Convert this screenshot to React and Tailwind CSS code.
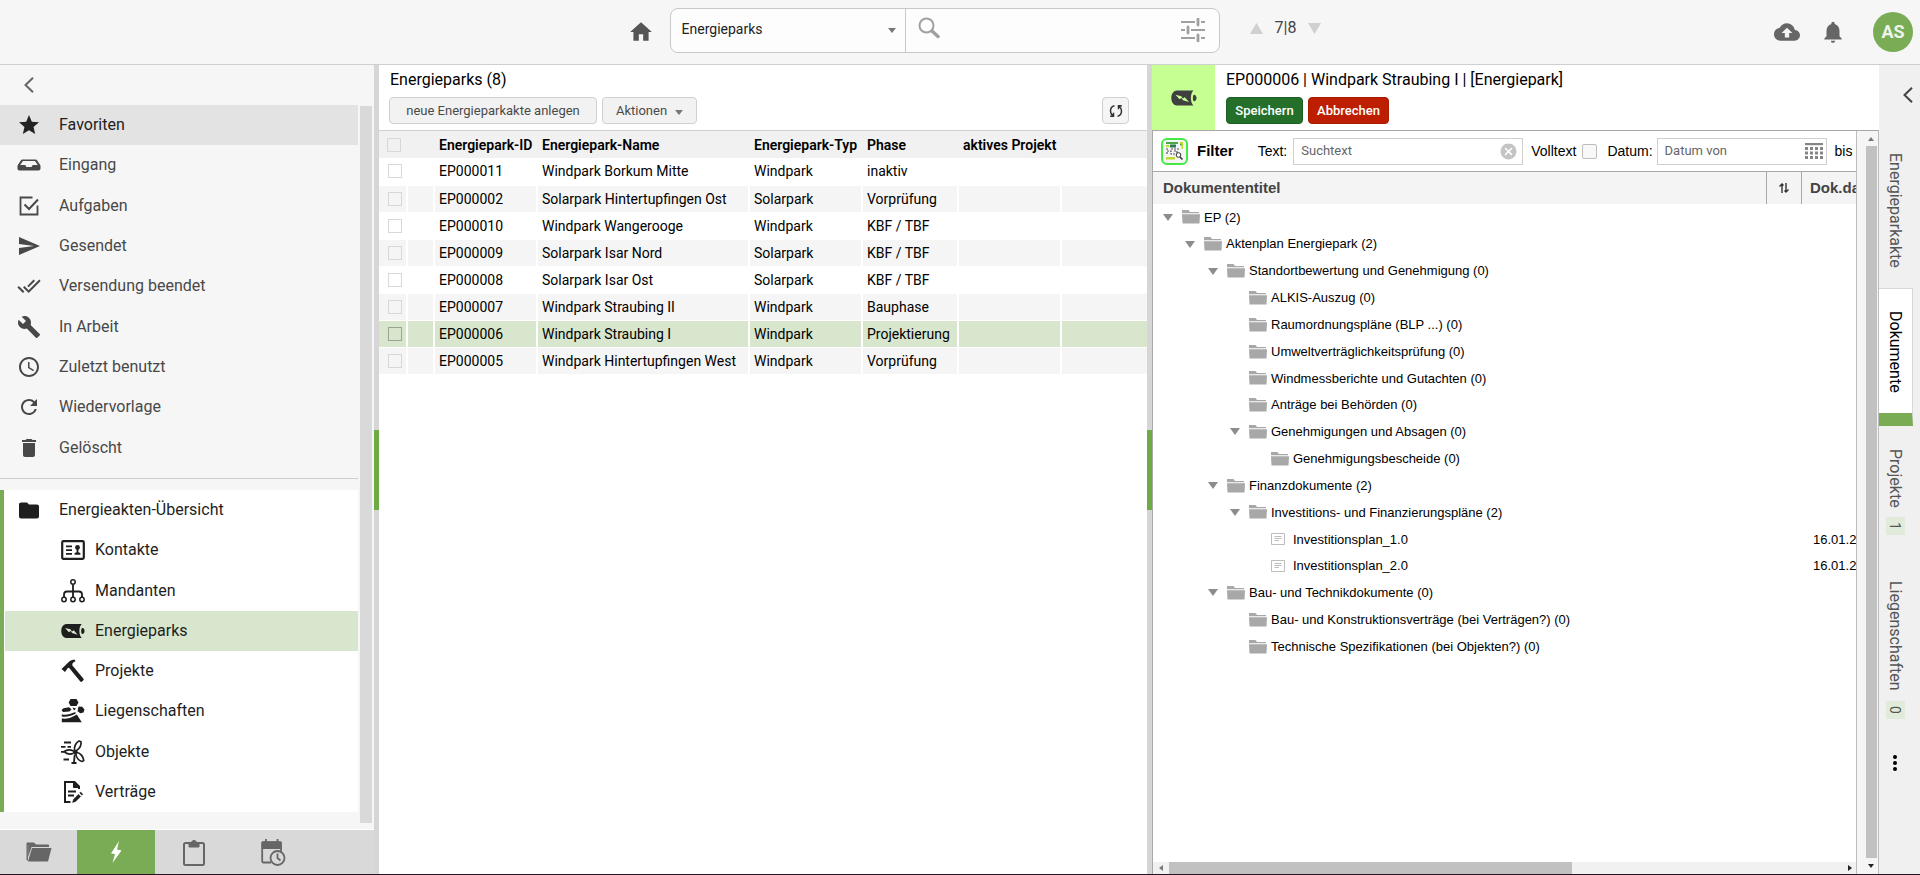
import { useState } from 'react';
import {
  MdAccessTime,
  MdBackup,
  MdBuild,
  MdCancel,
  MdDelete,
  MdDoneAll,
  MdFolder,
  MdHome,
  MdNotifications,
  MdRefresh,
  MdSend,
  MdStar,
} from 'react-icons/md';

function InboxIcon({ className }) {
  return (
    <svg className={className} viewBox="0 0 24 24" fill="currentColor">
      <path fillRule="evenodd" d="M5.500 6.500h13c.8 0 1.300.3 1.700 1l3 4.500c.2.400.3.700.3 1.200v2.300c0 1.100-.8 2-2 2h-19c-1.200 0-2-.9-2-2v-2.300c0-.5.1-.8.3-1.200l3-4.500c.4-.7.900-1 1.700-1zM6 8l-2.800 4h4.600c.5 0 .8.300 1 .8l.3.700c.2.400.4.500.8.500h4.200c.4 0 .6-.1.800-.5l.3-.7c.2-.5.5-.8 1-.8h4.600L18 8z" />
    </svg>
  );
}

function TaskIcon({ className }) {
  return (
    <svg className={className} viewBox="0 0 24 24" fill="none" stroke="currentColor" strokeWidth="1.800">
      <path d="M15.500 3.500H3.500v17h17V11.500" />
      <path d="M7.500 10.500l4.500 4.500L21 5.500" strokeWidth="2" />
    </svg>
  );
}

function ContactIcon({ className }) {
  return (
    <svg className={className} viewBox="0 0 24 24" fill="currentColor">
      <rect x="1.200" y="3.200" width="21.600" height="17.600" rx="1.200" fill="none" stroke="currentColor" strokeWidth="2.200" />
      <path d="M5 7.500h6v1.700H5zM5 11.200h6v1.700H5zM5 15h6v1.700H5z" />
      <circle cx="16.500" cy="9.500" r="2.400" />
      <path d="M15.600 11h1.800v3.200l2 .8v1.700h-5.800V15l2-.8z" />
    </svg>
  );
}

function OrgIcon({ className }) {
  return (
    <svg className={className} viewBox="0 0 24 24" fill="none" stroke="currentColor" strokeWidth="1.500">
      <circle cx="12" cy="3" r="2.200" />
      <circle cx="3" cy="20.500" r="2.200" />
      <circle cx="12" cy="20.500" r="2.200" />
      <circle cx="21" cy="20.500" r="2.200" />
      <path d="M12 5.500V18M3 18v-2.500c0-2 1-3 3-3h12c2 0 3 1 3 3V18" strokeWidth="1.800" />
    </svg>
  );
}

function BatteryIcon({ className }) {
  return (
    <svg className={className} viewBox="0 0 26 16" fill="currentColor">
      <path fillRule="evenodd" d="M6 .5h16.500c-1.600 1.500-2.600 4.300-2.600 7.500s1 6 2.600 7.500H6C2.700 15.500.3 12.200.3 8S2.700.5 6 .5zM4.500 4.800l4 4.500 2-1.200 1.500 2.200 6 1.700-4.200-4.700-2 1.200-1.500-2.300z" />
      <path d="M23.200 4.800c1.300 0 2.300 1.400 2.300 3.200s-1 3.200-2.300 3.200c-.9 0-1.300-1.100-1.300-3.200s.4-3.200 1.300-3.200z" />
    </svg>
  );
}

function HammerIcon({ className }) {
  return (
    <svg className={className} viewBox="0 0 24 24" fill="currentColor">
      <path d="M.5 10L8 2.800C9.600 1.400 11.300.8 14 .8l.3 1.600c-1.400.3-2 .8-2.700 1.800l-.4 2 11.300 13.600c.4.500.3 1-.1 1.400l-1.700 1.500c-.5.400-1 .4-1.400-.1L8.200 9l-1.200-.2L4 13z" />
    </svg>
  );
}

function EstateIcon({ className }) {
  return (
    <svg className={className} viewBox="0 0 24 24" fill="currentColor">
      <path d="M9.500 0h6l2 3.500-2 3.600h-6L7.700 3.500zM2.500 9.300l5.500-1 2.500 2-2 2.200-6.500.5-1.500-2zM17.500 7.500l3.700.2 2.300 2.800-1 3-3.200.8-2.800-2zM11.500 8.500l3.500 1-2 2z" />
      <path d="M.8 15.300c4 1.400 8-.1 13.700-2.300v1.700C9.500 17 5 18.200.8 17.400z" />
      <path d="M.8 19.500c5 .6 9.700-.6 15-4l5 7.800H.8z" />
    </svg>
  );
}

function TurbineIcon({ className }) {
  return (
    <svg className={className} viewBox="0 0 24 24" fill="none" stroke="currentColor" strokeWidth="1.700" strokeLinejoin="round">
      <path d="M13.500 10c-.5-3.500 1.500-7.500 4.500-9l2 .8c.5 3.500-1.500 6.700-4.500 8.700M16 12.500c3.500.5 6.500 4.500 6.800 8l-1.800 1c-3.500-1-6-4.500-6.200-8M12.500 13.200C9.500 14.500 5.500 14 3 11.700c2.500-2 6.500-2.200 9.500-.7" />
      <circle cx="14.300" cy="12" r="1.500" fill="currentColor" />
      <path d="M3 2.500h7M0 6.800h4.500M6.500 6.800h3.500M0 11.800h3M2.500 19.500H8M13.700 14.500L13 22.500M10.500 23h5" strokeWidth="1.800" />
    </svg>
  );
}

function ContractIcon({ className }) {
  return (
    <svg className={className} viewBox="0 0 24 24" fill="none" stroke="currentColor" strokeWidth="2">
      <path d="M9.500 22H4V2h9.500l4.500 4.500V9" />
      <path d="M12.500 2v5.500H18z" fill="currentColor" strokeWidth="1" />
      <path d="M7 11.500h8M7 15.500h6" strokeWidth="1.800" />
      <path d="M11.500 22.500l1-3.200 5-5 2.200 2.200-5 5zM18.700 13l1-1 2.200 2.200-1 1z" fill="currentColor" strokeWidth=".4" />
    </svg>
  );
}

function SlidersIcon({ className }) {
  return (
    <svg className={className} viewBox="0 0 24 24" stroke="currentColor" fill="none">
      <path d="M0 4h14M20 4h4M0 12h4M10 12h14M0 20h14M20 20h4" strokeWidth="1.800" />
      <path d="M17 1v6M7 9v6M17 17v6" strokeWidth="2.800" strokeLinecap="round" />
    </svg>
  );
}

function SearchIcon({ className }) {
  return (
    <svg className={className} viewBox="0 0 22 22" stroke="currentColor" fill="none">
      <circle cx="8.500" cy="8.500" r="7" strokeWidth="2" />
      <path d="M14 14l6 5.500" strokeWidth="3.400" strokeLinecap="round" />
    </svg>
  );
}

function ChevronLeft({ className }) {
  return (
    <svg className={className} viewBox="0 0 10 16" fill="none" stroke="currentColor" strokeWidth="2">
      <path d="M9 .8L1.500 8 9 15.200" />
    </svg>
  );
}

function Triangle({ className }) {
  return (
    <svg className={className} viewBox="0 0 10 6" preserveAspectRatio="none" fill="currentColor">
      <path d="M0 0h10L5 6z" />
    </svg>
  );
}

function TreeFolder() {
  return (
    <svg className="h-[14px] w-[18px] text-[#a8a8a8]" viewBox="0 0 18 14" fill="currentColor">
      <path d="M0 0h6.500l1.500 2h9v1.200H0zM0 4.200h18L17.500 13.500H.5z" />
    </svg>
  );
}

function TreeDocument() {
  return (
    <svg className="h-[14px] w-[14px] text-[#bdbdbd]" viewBox="0 0 14 14" fill="none" stroke="currentColor">
      <path d="M.5 1.500h13v11H.5zM3.500 4.500h7M3.500 6.500h7M3.500 8.500h4.500" />
    </svg>
  );
}

const mainMenu = [
  { label: 'Favoriten', icon: MdStar, active: true },
  { label: 'Eingang', icon: InboxIcon },
  { label: 'Aufgaben', icon: TaskIcon },
  { label: 'Gesendet', icon: MdSend },
  { label: 'Versendung beendet', icon: MdDoneAll },
  { label: 'In Arbeit', icon: MdBuild },
  { label: 'Zuletzt benutzt', icon: MdAccessTime },
  { label: 'Wiedervorlage', icon: MdRefresh },
  { label: 'Gelöscht', icon: MdDelete },
];

const energyMenu = [
  { label: 'Kontakte', icon: ContactIcon },
  { label: 'Mandanten', icon: OrgIcon },
  { label: 'Energieparks', icon: BatteryIcon, active: true },
  { label: 'Projekte', icon: HammerIcon },
  { label: 'Liegenschaften', icon: EstateIcon },
  { label: 'Objekte', icon: TurbineIcon },
  { label: 'Verträge', icon: ContractIcon },
];

const parks = [
  { id: 'EP000011', name: 'Windpark Borkum Mitte', type: 'Windpark', phase: 'inaktiv' },
  { id: 'EP000002', name: 'Solarpark Hintertupfingen Ost', type: 'Solarpark', phase: 'Vorprüfung' },
  { id: 'EP000010', name: 'Windpark Wangerooge', type: 'Windpark', phase: 'KBF / TBF' },
  { id: 'EP000009', name: 'Solarpark Isar Nord', type: 'Solarpark', phase: 'KBF / TBF' },
  { id: 'EP000008', name: 'Solarpark Isar Ost', type: 'Solarpark', phase: 'KBF / TBF' },
  { id: 'EP000007', name: 'Windpark Straubing II', type: 'Windpark', phase: 'Bauphase' },
  { id: 'EP000006', name: 'Windpark Straubing I', type: 'Windpark', phase: 'Projektierung' },
  { id: 'EP000005', name: 'Windpark Hintertupfingen West', type: 'Windpark', phase: 'Vorprüfung' },
];

const documents = [
  { level: 0, label: 'EP (2)', open: true },
  { level: 1, label: 'Aktenplan Energiepark (2)', open: true },
  { level: 2, label: 'Standortbewertung und Genehmigung (0)', open: true },
  { level: 3, label: 'ALKIS-Auszug (0)' },
  { level: 3, label: 'Raumordnungspläne (BLP ...) (0)' },
  { level: 3, label: 'Umweltverträglichkeitsprüfung (0)' },
  { level: 3, label: 'Windmessberichte und Gutachten (0)' },
  { level: 3, label: 'Anträge bei Behörden (0)' },
  { level: 3, label: 'Genehmigungen und Absagen (0)', open: true },
  { level: 4, label: 'Genehmigungsbescheide (0)' },
  { level: 2, label: 'Finanzdokumente (2)', open: true },
  { level: 3, label: 'Investitions- und Finanzierungspläne (2)', open: true },
  { level: 4, label: 'Investitionsplan_1.0', date: '16.01.2024' },
  { level: 4, label: 'Investitionsplan_2.0', date: '16.01.2024' },
  { level: 2, label: 'Bau- und Technikdokumente (0)', open: true },
  { level: 3, label: 'Bau- und Konstruktionsverträge (bei Verträgen?) (0)' },
  { level: 3, label: 'Technische Spezifikationen (bei Objekten?) (0)' },
];

const indents = ['pl-[10px]', 'pl-[32px]', 'pl-[55px]', 'pl-[77px]', 'pl-[99px]'];

function Header() {
  return (
    <header className="flex h-[65px] shrink-0 items-center border-b border-[#cfcfcf] bg-[#f6f6f6] pr-[7px]">
      <div className="flex w-[35%] items-center justify-end pr-4">
        <button aria-label="Startseite" className="text-[#555]">
          <MdHome className="h-[26px] w-[26px]" />
        </button>
      </div>
      <div className="mb-1 flex h-[45px] w-[550px] overflow-hidden rounded-lg border border-[#c8c8c8] bg-[#fdfdfd]">
        <div className="relative w-[235px] border-r border-[#c8c8c8]">
          <select aria-label="Suchbereich" className="h-[41px] w-full appearance-none pl-[11px] text-sm text-[#222] outline-none">
            <option>Energieparks</option>
          </select>
          <Triangle className="pointer-events-none absolute top-[19px] right-[9px] h-[5px] w-2 text-[#777]" />
        </div>
        <label className="flex flex-1 items-center pr-[14px] pl-3 text-[#a0a0a0]">
          <SearchIcon className="mb-1 h-[22px] w-[22px]" />
          <input aria-label="Suche" className="min-w-0 flex-1 px-2 text-sm text-[#222] outline-none" />
          <SlidersIcon className="h-6 w-6" />
        </label>
      </div>
      <div className="flex flex-1 items-center">
        <div className="mb-2 flex items-center gap-3 pl-[30px] text-[#d0d0d0]">
          <button aria-label="Vorheriger Eintrag">
            <Triangle className="h-[11px] w-[13px] rotate-180" />
          </button>
          <span className="text-base text-[#444]">7|8</span>
          <button aria-label="Nächster Eintrag">
            <Triangle className="h-[11px] w-[13px]" />
          </button>
        </div>
        <div className="ml-auto flex items-center text-[#666]">
          <button aria-label="Hochladen" className="mr-5">
            <MdBackup className="h-[26px] w-[26px]" />
          </button>
          <button aria-label="Benachrichtigungen" className="mr-[27px]">
            <MdNotifications className="h-[26px] w-[26px]" />
          </button>
          <button className="h-10 w-10 rounded-full bg-[#79ac55] text-lg font-bold text-[#eef4ea]">AS</button>
        </div>
      </div>
    </header>
  );
}

function Sidebar() {
  return (
    <aside className="flex w-[374px] shrink-0 flex-col bg-[#f6f6f6]">
      <button aria-label="Menü einklappen" className="flex h-10 shrink-0 items-center pl-6 text-[#666]">
        <ChevronLeft className="h-4 w-[10px]" />
      </button>
      <div className="flex min-h-0 flex-1 border-b border-white">
        <nav className="min-w-0 flex-1">
          <ul className="grid h-[363px] auto-rows-fr">
            {mainMenu.map(({ label, icon: Icon, active }) => (
              <li key={label}>
                <a
                  href="#"
                  className={`flex h-full items-center pl-[17px] text-base ${
                    active ? 'bg-[#e3e3e3] text-[#222]' : 'text-[#484848]'
                  }`}
                >
                  <Icon className="mr-[18px] h-6 w-6" />
                  {label}
                </a>
              </li>
            ))}
          </ul>
          <hr className="mt-[10px] mb-[11px] border-[#cfcfcf]" />
          <ul className="grid h-[322px] auto-rows-fr border-l-4 border-[#79ac55] bg-white text-base text-[#1e1e1e]">
            <li>
              <a href="#" className="flex h-full items-center pl-[13px]">
                <MdFolder className="mr-[18px] h-[25px] w-6" />
                Energieakten-Übersicht
              </a>
            </li>
            {energyMenu.map(({ label, icon: Icon, active }) => (
              <li key={label} className="pl-px">
                <a href="#" className={`flex h-full items-center pl-14 ${active ? 'bg-[#d8e6cd]' : ''}`}>
                  <Icon className="mr-[10px] h-6 w-6" />
                  {label}
                </a>
              </li>
            ))}
          </ul>
        </nav>
        <div className="mt-px mr-0.5 mb-1.5 ml-0.5 w-3 bg-[#d9d9d9]" />
      </div>
      <div className="flex h-11 shrink-0 bg-[#d9d9d9] text-[#666]">
        <button aria-label="Akten" className="flex w-[77px] items-center justify-center">
          <svg className="h-[20px] w-[26px]" viewBox="0 0 26 20" fill="currentColor">
            <path d="M.5 1.500C.5 1 1 .5 1.500.5H8l2 2h12c.6 0 1 .4 1 1V5H5.500L2.200 15V3H1.900V18.500H1.500c-.6 0-1-.4-1-1z" />
            <path d="M6 6h19.500L22.300 18.500c-.2.600-.5 1-1 1H2z" />
          </svg>
        </button>
        <button aria-label="Energie" className="flex w-[78px] items-center justify-center bg-[#79ac55] text-white">
          <svg className="h-[22px] w-3" viewBox="0 0 12 22" fill="currentColor">
            <path d="M9 0L1 12.500l4 .5L2.500 22 11.500 9.500l-4.500-1z" />
          </svg>
        </button>
        <button aria-label="Aufgabenliste" className="flex w-[78px] items-center justify-center">
          <svg className="h-[27px] w-[22px]" viewBox="0 0 22 27" fill="none" stroke="currentColor" strokeWidth="2">
            <rect x="1" y="4" width="20" height="22" rx="1.500" />
            <path d="M6 4h10v4H6zM8.500 4a2.500 2.500 0 0 1 5 0z" fill="currentColor" strokeWidth="1" />
          </svg>
        </button>
        <button aria-label="Termine" className="flex w-20 items-center justify-center">
          <svg className="h-[27px] w-[25px]" viewBox="0 0 25 27" fill="none" stroke="currentColor" strokeWidth="1.800">
            <path d="M10 23.500H2.500c-.8 0-1.300-.5-1.300-1.300V4.500c0-.8.5-1.300 1.300-1.300h16.200c.8 0 1.300.5 1.300 1.300V13M5 0v4M16.500 0v4" />
            <path d="M1.500 3.500h18V9h-18z" fill="currentColor" />
            <circle cx="16.500" cy="19" r="7" fill="#d9d9d9" />
            <path d="M16.500 14.500V19l3 2.500" />
          </svg>
        </button>
      </div>
    </aside>
  );
}

function Splitter() {
  return (
    <div className="flex w-[5px] shrink-0 items-center bg-[#d6d6d6]">
      <div className="h-20 w-full bg-[#6fab45]" />
    </div>
  );
}

function ParkList() {
  const [selected, setSelected] = useState('EP000006');

  const cellColor = (park, index) => {
    if (park.id === selected) return 'bg-[#d8e6cd]';
    return index % 2 === 1 ? 'bg-[#f5f5f5]' : 'bg-white';
  };

  return (
    <main className="flex w-2/5 shrink-0 flex-col">
      <div className="h-[66px] border-b border-[#cfcfcf] pr-[18px] pl-[10px]">
        <h1 className="pt-[3px] pl-px text-base leading-6">Energieparks (8)</h1>
        <div className="mt-[5px] flex gap-[5px] text-[13px] text-[#4a4a4a]">
          <button className="h-[27px] w-[208px] rounded border border-[#d0d0d0] bg-[#f2f2f2]">
            neue Energieparkakte anlegen
          </button>
          <button className="flex h-[27px] w-[95px] items-center justify-center gap-2 rounded border border-[#d0d0d0] bg-[#f2f2f2]">
            Aktionen
            <Triangle className="mt-1 h-[5px] w-2 text-[#777]" />
          </button>
          <button aria-label="Aktualisieren" className="ml-auto flex h-[27px] w-[27px] items-center justify-center rounded border border-[#d0d0d0] bg-[#f5f5f5]">
            <svg className="h-[14px] w-[14px]" viewBox="0 0 14 14" fill="none" stroke="#333" strokeWidth="1.500">
              <path d="M5.500 1.800C2.800 2.300 1.500 4.500 1.500 7c0 2 .8 3.500 2.200 4.700M4.500 8.800v3.400H1.200M8.500 12.200c2.700-.5 4-2.700 4-5.200 0-2-.8-3.500-2.200-4.700M9.500 5.200V1.800h3.300" />
            </svg>
          </button>
        </div>
      </div>
      <table className="w-full table-fixed border-collapse text-sm">
        <colgroup>
          <col className="w-[28px]" />
          <col className="w-[27px]" />
          <col className="w-[103px]" />
          <col className="w-[212px]" />
          <col className="w-[113px]" />
          <col className="w-[96px]" />
          <col className="w-[103px]" />
          <col />
        </colgroup>
        <thead>
          <tr className="h-[27px] bg-[#f1f1f1] text-left">
            <th className="pl-2">
              <input type="checkbox" aria-label="Alle auswählen" className="block h-[14px] w-[14px] appearance-none border border-[#d8d8d8]" />
            </th>
            <th />
            <th className="pl-[5px] font-semibold whitespace-nowrap">Energiepark-ID</th>
            <th className="pl-[5px] font-semibold whitespace-nowrap">Energiepark-Name</th>
            <th className="pl-[5px] font-semibold whitespace-nowrap">Energiepark-Typ</th>
            <th className="pl-[5px] font-semibold whitespace-nowrap">Phase</th>
            <th className="pl-[5px] font-semibold whitespace-nowrap">aktives Projekt</th>
            <th />
          </tr>
        </thead>
        <tbody>
          {parks.map((park, index) => (
            <tr
              key={park.id}
              onClick={() => setSelected(park.id)}
              className={`h-[27px] border-b border-white [&>td]:whitespace-nowrap [&>td:not(:last-child)]:border-r-2 [&>td:not(:last-child)]:border-white ${cellColor(park, index)}`}
            >
              <td className="pl-[9px]">
                <input
                  type="checkbox"
                  aria-label={park.id}
                  className={`block h-[14px] w-[14px] appearance-none border ${
                    park.id === selected ? 'border-[#9aa392]' : 'border-[#d8d8d8]'
                  }`}
                />
              </td>
              <td />
              <td className="pl-1">{park.id}</td>
              <td className="pl-1">{park.name}</td>
              <td className="pl-1">{park.type}</td>
              <td className="pl-1">{park.phase}</td>
              <td />
              <td />
            </tr>
          ))}
        </tbody>
      </table>
    </main>
  );
}

function FilterBar() {
  return (
    <div className="flex h-10 shrink-0 items-center font-['Liberation_Sans',sans-serif] text-[15px] whitespace-nowrap">
      <button aria-label="Filteransicht" className="mr-[9px] ml-2 flex h-[27px] w-[27px] shrink-0 items-center justify-center rounded-md border-2 border-[#45e845] bg-[#f4f4f4]">
        <svg className="h-[18px] w-[17px]" viewBox="0 0 17 18" fill="none">
          <path d="M0 1h12M14 2.500h3" stroke="#49a84b" strokeWidth="2" />
          <path d="M14 0h3v7h-1.500V2H14zM0 15h9v2.500H0zM0 3h3v2H0z" fill="#b9dc2a" />
          <path d="M4 2.500h6v3H4z" fill="#287a52" />
          <path d="M0 7h3M5 7h9M1 12V9h4v3h5M8 9h3v3h4" stroke="#555" strokeWidth="1.200" strokeDasharray="2 1" />
          <circle cx="12.500" cy="13" r="2.300" fill="#fff" stroke="#333" />
          <path d="M14 15l2.500 2.500" stroke="#333" strokeWidth="1.500" />
        </svg>
      </button>
      <span className="mr-6 font-bold">Filter</span>
      <label htmlFor="filter-text" className="mr-1.5 text-sm">Text:</label>
      <div className="flex h-[27px] w-[230px] shrink-0 items-center border border-[#cfcfcf] bg-white pr-1">
        <input
          id="filter-text"
          placeholder="Suchtext"
          className="min-w-0 flex-1 pl-[7px] font-[Roboto,sans-serif] text-[13px] text-[#222] outline-none placeholder:text-[#666]"
        />
        <button aria-label="Suchtext löschen" className="text-[#c4c4c4]">
          <MdCancel className="h-[19px] w-[19px]" />
        </button>
      </div>
      <label htmlFor="fulltext" className="mr-1.5 ml-2 text-sm">Volltext</label>
      <input id="fulltext" type="checkbox" className="h-[15px] w-[15px] shrink-0 appearance-none rounded-xs border border-[#bdbdbd] bg-[#f8f8f8]" />
      <label htmlFor="date-from" className="mr-1 ml-[10px] text-sm">Datum:</label>
      <div className="flex h-[27px] w-[170px] shrink-0 items-center border border-[#cfcfcf] bg-white pr-[3px]">
        <input
          id="date-from"
          placeholder="Datum von"
          className="min-w-0 flex-1 pl-[7px] font-[Roboto,sans-serif] text-[13px] text-[#222] outline-none placeholder:text-[#666]"
        />
        <svg className="h-4 w-[18px]" viewBox="0 0 18 16" fill="#858585">
          <path d="M0 0h18v2.200H0z" />
          <path d="M0 4h3v3H0zM5 4h3v3H5zM10 4h3v3h-3zM15 4h3v3h-3zM0 8.500h3v3H0zM5 8.500h3v3H5zM10 8.500h3v3h-3zM15 8.500h3v3h-3zM0 13h3v3H0zM5 13h3v3H5zM10 13h3v3h-3zM15 13h3v3h-3z" />
        </svg>
      </div>
      <span className="ml-2 text-sm">bis</span>
    </div>
  );
}

function DocumentPanel() {
  return (
    <section className="flex min-w-0 flex-1 flex-col bg-white">
      <div className="flex h-[65px] shrink-0">
        <div className="flex w-[63px] items-center justify-center bg-[#c6ff92] text-[#404040]">
          <BatteryIcon className="h-4 w-[26px]" />
        </div>
        <div className="pl-[11px]">
          <h2 className="pt-[3px] text-base leading-6">EP000006 | Windpark Straubing I | [Energiepark]</h2>
          <div className="mt-[5px] flex gap-[5px] text-[13px] font-medium text-white">
            <button className="h-[27px] w-[77px] rounded border border-[#1d5f23] bg-[#24702b]">Speichern</button>
            <button className="h-[27px] w-[81px] rounded border border-[#a81c00] bg-[#bd1e00]">Abbrechen</button>
          </div>
        </div>
      </div>
      <div className="flex min-h-0 flex-1 border-t border-l border-[#a8a8a8]">
        <div className="flex min-w-0 flex-1 flex-col overflow-hidden">
          <FilterBar />
          <div className="flex h-[33px] shrink-0 border-t border-[#a8a8a8] bg-[#f4f4f4] font-['Liberation_Sans',sans-serif] text-[15px] leading-8 font-bold text-[#444]">
            <span className="flex-1 pl-[10px]">Dokumententitel</span>
            <button aria-label="Sortieren" className="flex w-9 items-center justify-center border-x border-[#a8a8a8]">
              <svg className="h-[10px] w-[10px]" viewBox="0 0 10 10" fill="none" stroke="#333" strokeWidth="1.400">
                <path d="M3 10V1M.5 3.500L3 1l1.500 1.500M7 0v9M5.500 7.500L7 9l2.500-2.500" />
              </svg>
            </button>
            <span className="w-[54px] overflow-hidden pl-2 whitespace-nowrap">Dok.datum</span>
          </div>
          <ul className="grid h-[456px] shrink-0 auto-rows-fr font-['Liberation_Sans',sans-serif] text-[13px]">
            {documents.map((doc) => (
              <li key={doc.label} className={`flex items-center ${indents[doc.level]}`}>
                <span className="w-[19px] shrink-0">
                  {doc.open && <Triangle className="h-[7px] w-[10px] text-[#8c8c8c]" />}
                </span>
                {doc.date ? <TreeDocument /> : <TreeFolder />}
                <span className={doc.date ? 'pl-2' : 'pl-1'}>{doc.label}</span>
                {doc.date && (
                  <span className="ml-auto w-[43px] overflow-hidden whitespace-nowrap">{doc.date}</span>
                )}
              </li>
            ))}
          </ul>
          <div className="mt-auto flex h-3 shrink-0 items-center bg-[#f1f1f1]">
            <Triangle className="mx-[5px] h-[4px] w-[6px] rotate-90 text-[#777]" />
            <div className="h-full w-[403px] bg-[#c1c1c1]" />
            <Triangle className="mr-[3px] ml-auto h-[4px] w-[6px] -rotate-90 text-[#222]" />
          </div>
        </div>
        <div className="flex w-[23px] shrink-0 flex-col items-center border-x border-[#bdbdbd] bg-[#f5f5f5] pl-[7px]">
          <div className="flex h-[15px] items-center">
            <Triangle className="h-1 w-[6px] rotate-180 text-[#777]" />
          </div>
          <div className="w-[11px] flex-1 bg-[#c1c1c1]" />
          <div className="flex h-4 items-center">
            <Triangle className="h-1 w-[6px] text-[#222]" />
          </div>
        </div>
      </div>
    </section>
  );
}

function TabRail() {
  return (
    <nav className="flex w-[41px] shrink-0 flex-col items-start bg-[#f0f0f0] text-base text-[#555]">
      <button aria-label="Bereich ausklappen" className="mt-[22px] mr-[7px] self-end text-[#444]">
        <ChevronLeft className="h-4 w-[10px]" />
      </button>
      <a href="#" className="mt-[50px] [writing-mode:vertical-rl]">
        <span className="leading-8">Energieparkakte</span>
      </a>
      <a
        href="#"
        className="mt-5 flex h-[138px] w-[34px] flex-row-reverse justify-end border-t border-r border-b-[13px] border-t-[#d8d8d8] border-r-[#d8d8d8] border-b-[#79ac55] bg-white"
      >
        <span className="mt-[22px] leading-8 text-black [writing-mode:vertical-rl]">Dokumente</span>
      </a>
      <a href="#" className="mt-[23px] flex items-center gap-[10px] [writing-mode:vertical-rl]">
        <span className="leading-8">Projekte</span>
        <span className="flex h-[18px] w-[19px] items-center justify-center bg-[#e0ecd9] text-sm">1</span>
      </a>
      <a href="#" className="mt-[46px] flex items-center gap-[10px] [writing-mode:vertical-rl]">
        <span className="leading-8">Liegenschaften</span>
        <span className="flex h-[18px] w-[19px] items-center justify-center bg-[#e0ecd9] text-sm">0</span>
      </a>
      <button aria-label="Weitere Reiter" className="mt-[35px] ml-[14px] text-black">
        <svg className="h-[18px] w-1" viewBox="0 0 4 18" fill="currentColor">
          <circle cx="2" cy="3" r="2" />
          <circle cx="2" cy="9" r="2" />
          <circle cx="2" cy="15" r="2" />
        </svg>
      </button>
    </nav>
  );
}

export default function App() {
  return (
    <div className="flex h-screen flex-col border-b border-[#2a1024] bg-white font-[Roboto,sans-serif] text-black">
      <Header />
      <div className="flex min-h-0 flex-1">
        <Sidebar />
        <Splitter />
        <ParkList />
        <Splitter />
        <DocumentPanel />
        <TabRail />
      </div>
    </div>
  );
}
